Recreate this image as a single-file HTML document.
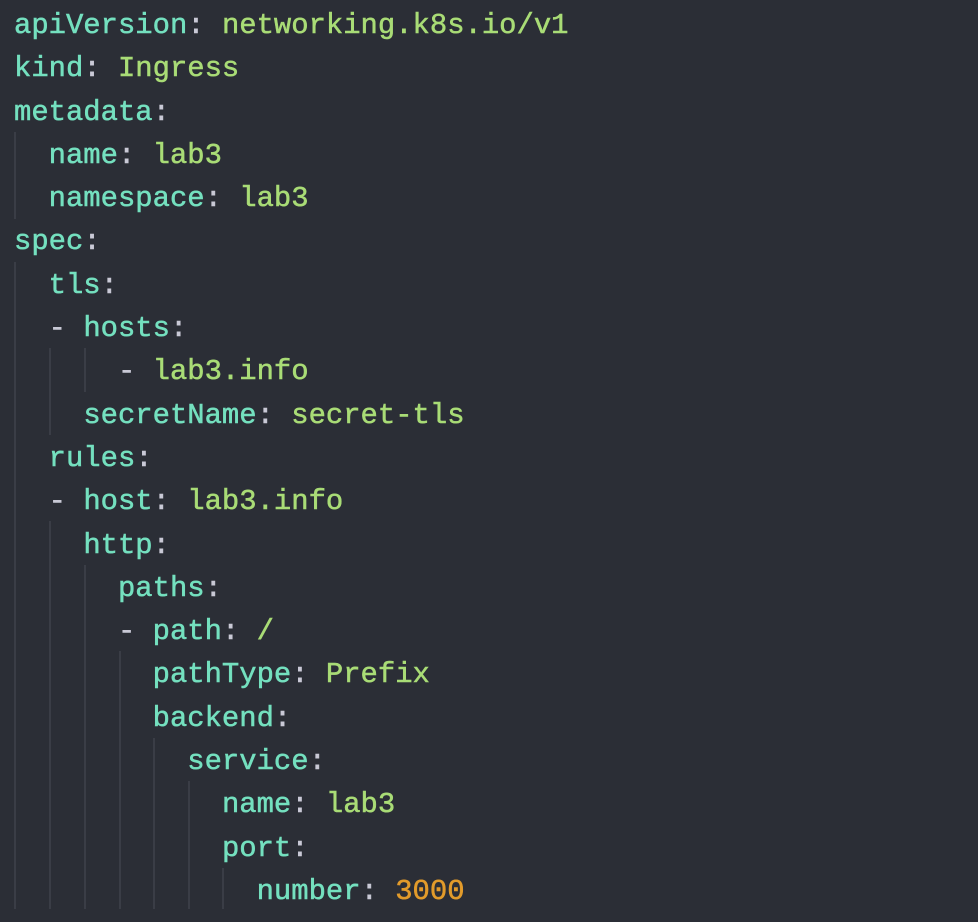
<!DOCTYPE html>
<html><head><meta charset="utf-8"><style>
html,body{margin:0;padding:0;background:#2b2e36;width:978px;height:922px;overflow:hidden}
#c{position:absolute;left:14px;top:4px;font-family:"Liberation Mono",monospace;font-size:28.88px;line-height:43.3px;white-space:pre;color:#c9c9d6;-webkit-text-stroke:0.5px currentColor}
.k{color:#74e0bf}.v{color:#a9dc76}.n{color:#e29b2b}.p{color:#c9c9d6}
.g{position:absolute;width:2px;background:#3a3d46}
</style></head><body>
<div class="g" style="left:14px;top:132px;height:87px"></div>
<div class="g" style="left:14px;top:262px;height:647px"></div>
<div class="g" style="left:49px;top:348px;height:87px"></div>
<div class="g" style="left:49px;top:521px;height:388px"></div>
<div class="g" style="left:84px;top:348px;height:44px"></div>
<div class="g" style="left:84px;top:565px;height:344px"></div>
<div class="g" style="left:119px;top:651px;height:258px"></div>
<div class="g" style="left:153px;top:738px;height:171px"></div>
<div class="g" style="left:188px;top:781px;height:128px"></div>
<div class="g" style="left:222px;top:868px;height:41px"></div>
<div id="c"><span class="k">apiVersion</span>: <span class="v">networking.k8s.io/v1</span>
<span class="k">kind</span>: <span class="v">Ingress</span>
<span class="k">metadata</span>:
  <span class="k">name</span>: <span class="v">lab3</span>
  <span class="k">namespace</span>: <span class="v">lab3</span>
<span class="k">spec</span>:
  <span class="k">tls</span>:
  - <span class="k">hosts</span>:
      - <span class="v">lab3.info</span>
    <span class="k">secretName</span>: <span class="v">secret-tls</span>
  <span class="k">rules</span>:
  - <span class="k">host</span>: <span class="v">lab3.info</span>
    <span class="k">http</span>:
      <span class="k">paths</span>:
      - <span class="k">path</span>: <span class="v">/</span>
        <span class="k">pathType</span>: <span class="v">Prefix</span>
        <span class="k">backend</span>:
          <span class="k">service</span>:
            <span class="k">name</span>: <span class="v">lab3</span>
            <span class="k">port</span>:
              <span class="k">number</span>: <span class="n">3000</span></div>
</body></html>
